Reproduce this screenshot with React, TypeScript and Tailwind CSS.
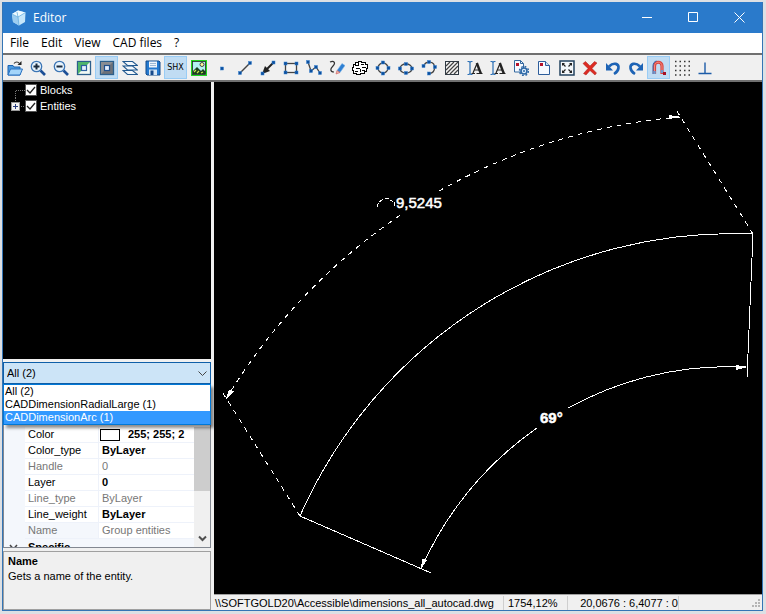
import type { ReactNode } from 'react';
import clsx from 'clsx';

const NODE = '#0b4f9e';
const LINE = '#444444';

// Small square handles drawn on the ends of every entity icon
function Nodes({ points }: { points: number[][] }) {
  return (
    <>
      {points.map(([x, y]) => (
        <rect key={`${x}-${y}`} x={x - 1.5} y={y - 1.5} width="3" height="3" fill={NODE} stroke="#3b82cf" strokeWidth="0.5" />
      ))}
    </>
  );
}

function Magnifier({ plus }: { plus?: boolean }) {
  return (
    <>
      <path d="M10.5 10.5l4.5 4.5" stroke="#1c4f96" strokeWidth="2.6" />
      <circle cx="6.5" cy="6.5" r="5.2" fill="#e8f4fd" stroke="#3d76b5" strokeWidth="1.3" />
      <path d={plus ? 'M3.5 6.5h6M6.5 3.5v6' : 'M3.5 6.5h6'} stroke="#1b2a3c" strokeWidth="2" />
    </>
  );
}

function TextTool() {
  return (
    <>
      <path d="M0.5 1.5h1.5l1 1 1-1h1.5M3 2v12M0.5 14.5h1.5l1-1 1 1h1.5" fill="none" stroke="#2a6fb5" strokeWidth="1.2" />
      <path d="M4.5 13.5h3.5M9.5 13.5h6M6 13l4-9.5" fill="none" stroke="#222" strokeWidth="1.2" />
      <path d="M9.8 3l4 10.5" stroke="#222" strokeWidth="2.4" />
      <path d="M7.5 10h4.5" stroke="#222" />
    </>
  );
}

const tools: { label: string; pressed?: boolean; icon: ReactNode }[] = [
  {
    label: 'Open',
    icon: (
      <>
        <path d="M1 5.5h5L7 7h6v8H1z" fill="#4a9ae0" stroke="#1c62b0" />
        <path d="M3.5 9h12L13 15H1z" fill="#a4d5fa" stroke="#2871c0" />
        <path d="M7 3.5c1.5-2 4-2 5.5 0" fill="none" stroke="#333" strokeWidth="1.2" />
        <path d="M14.5 1v4h-4z" fill="#222" />
      </>
    ),
  },
  { label: 'Zoom in', icon: <Magnifier plus /> },
  { label: 'Zoom out', icon: <Magnifier /> },
  {
    label: 'Bird view',
    icon: (
      <>
        <rect x="1.5" y="1.5" width="13" height="13" fill="#f2faf5" stroke="#2c5f8c" strokeWidth="1.3" />
        <path d="M2 2h12L2 14z" fill="#4fb56b" />
        <rect x="5.5" y="5.5" width="5" height="5" fill="#e5f1ff" stroke="#2d62a0" strokeWidth="1.2" />
      </>
    ),
  },
  {
    label: 'Background',
    pressed: true,
    icon: (
      <>
        <rect x="1.5" y="1.5" width="13" height="13" fill="#6d7178" stroke="#2c5f8c" strokeWidth="1.3" />
        <path d="M2 2h12L2 14z" fill="#8a8d92" />
        <rect x="5.5" y="5.5" width="5" height="5" fill="#e4efff" stroke="#1f4f8c" strokeWidth="1.2" />
      </>
    ),
  },
  {
    label: 'Layers',
    icon: (
      <g fill="#f3f8fc" stroke="#21588f" strokeWidth="1.1">
        <path d="M1 10.5h9.5l5 4H5.5z" />
        <path d="M1 6h9.5l5 4H5.5z" />
        <path d="M1 1.5h9.5l5 4H5.5z" />
      </g>
    ),
  },
  {
    label: 'Save',
    icon: (
      <>
        <path d="M1 1h13l1 1v13H2l-1-1z" fill="#2479cf" stroke="#124a8a" />
        <path d="M4 1.5h8v6H4z" fill="#f0f5fb" />
        <path d="M5 3.5h6M5 5.5h6" stroke="#9db9d6" />
        <path d="M4 9.5h8V15H4z" fill="#d5e5f5" />
        <path d="M5.5 10.5h3V15h-3z" fill="#15488a" />
      </>
    ),
  },
  { label: 'SHX', pressed: true, icon: null },
  {
    label: 'Image',
    icon: (
      <>
        <rect x="0.5" y="0.5" width="15" height="15" fill="#b3f1f2" stroke="#20d820" strokeWidth="1.5" />
        <rect x="1.5" y="1.5" width="13" height="13" fill="none" stroke="#222" strokeWidth="0.8" />
        <circle cx="11" cy="4.5" r="2" fill="#fff9a0" stroke="#222" strokeWidth="0.8" />
        <path d="M2 11l4-4 4 4 2-2 2.500 2.500V14H2z" fill="#173f1b" />
        <path d="M3 12l2-2M6 13l2-2M10 13l2-1" stroke="#c9e54c" strokeWidth="1.2" />
      </>
    ),
  },
  { label: 'Point', icon: <Nodes points={[[8, 8.5]]} /> },
  {
    label: 'Line',
    icon: (
      <>
        <path d="M3 13L13 3" stroke={LINE} strokeWidth="1.5" />
        <Nodes points={[[3, 13], [13, 3]]} />
      </>
    ),
  },
  {
    label: 'Leader',
    icon: (
      <>
        <path d="M13 3L6 10" stroke="#222" strokeWidth="2" />
        <path d="M2 14l3-8 5 5z" fill="#222" />
        <Nodes points={[[13.5, 2.5], [2.5, 13.5]]} />
      </>
    ),
  },
  {
    label: 'Rectangle',
    icon: (
      <>
        <rect x="2.5" y="3.5" width="11" height="9" fill="#f5f5f5" stroke={LINE} strokeWidth="1.3" />
        <Nodes points={[[2.5, 3.5], [13.5, 3.5], [2.5, 12.5], [13.5, 12.5]]} />
      </>
    ),
  },
  {
    label: 'Polyline',
    icon: (
      <>
        <path d="M2 2l3 9 5-4 4 6" fill="none" stroke={LINE} strokeWidth="1.3" />
        <Nodes points={[[2, 2], [5, 11], [10, 7], [14, 13]]} />
      </>
    ),
  },
  {
    label: 'Freehand',
    icon: (
      <>
        <path d="M1 2c4-2 6 1 3 4s-3 6 1 6" fill="none" stroke="#333" strokeWidth="1.2" />
        <path d="M8 10.5l5-7 3 2-5 7z" fill="#2e7fd2" stroke="#7ab4ea" strokeWidth="0.6" />
        <path d="M8 10.5l3 2-4 1.5z" fill="#e8b9ac" stroke="#c55" strokeWidth="0.6" />
      </>
    ),
  },
  {
    label: 'Cloud',
    icon: (
      <g fill="white" stroke="#000" strokeWidth="1" shapeRendering="crispEdges">
        <path d="M3.5 2.500h3v-1h3v1h4v2h2v4h-1v3h-2v2h-4v1h-4v-1h-3v-3h-1v-3h1v-3h2z" />
        <path d="M3 5.500h3M6.500 3v3M9 4.500h3M10 7.500h4M4 8.500h4M3 11.500h3M8.500 9v3M10 10.500h3" fill="none" />
      </g>
    ),
  },
  {
    label: 'Circle',
    icon: (
      <>
        <circle cx="8" cy="8" r="5" fill="none" stroke={LINE} strokeWidth="1.3" />
        <Nodes points={[[8, 2.5], [2.5, 8], [13.5, 8], [8, 13.5]]} />
      </>
    ),
  },
  {
    label: 'Ellipse',
    icon: (
      <>
        <ellipse cx="8" cy="8.5" rx="6" ry="4.5" fill="none" stroke={LINE} strokeWidth="1.3" />
        <Nodes points={[[8, 4], [2, 8.5], [14, 8.5], [8, 13]]} />
      </>
    ),
  },
  {
    label: 'Arc',
    icon: (
      <>
        <path d="M2.500 6C5 0 14 1 13.500 8c0 3-2 5-5 5.500" fill="none" stroke={LINE} strokeWidth="1.3" />
        <Nodes points={[[2.5, 6], [8, 2], [14, 7], [8, 13.5]]} />
      </>
    ),
  },
  {
    label: 'Hatch',
    icon: (
      <>
        <rect x="1.5" y="1.5" width="13" height="13" fill="#f6f6f6" stroke="#2f3a45" />
        <path d="M2 6l4-4M2 10l8-8M2 14L14 2M6 14l8-8M10 14l4-4" stroke="#444" strokeWidth="1.2" />
      </>
    ),
  },
  { label: 'Text', icon: <TextTool /> },
  { label: 'Multiline text', icon: <TextTool /> },
  {
    label: 'Block settings',
    icon: (
      <>
        <path d="M1.5 0.5h6l3 3v8.5h-9z" fill="#f6faff" stroke="#33689f" />
        <path d="M7.5 0.5v3h3" fill="none" stroke="#33689f" />
        <rect x="3" y="3" width="3" height="3" fill="#b5122a" />
        <circle cx="11" cy="11" r="3" fill="#d9ebfb" stroke="#2d68a6" strokeWidth="1.6" />
        <circle cx="11" cy="11" r="4.5" fill="none" stroke="#2d68a6" strokeWidth="1.5" strokeDasharray="1.8 1.734" />
        <circle cx="11" cy="11" r="1" fill="#2d68a6" />
      </>
    ),
  },
  {
    label: 'New block',
    icon: (
      <>
        <path d="M2.5 1.5h7l4 4v9h-11z" fill="#f6faff" stroke="#2d5d9b" />
        <path d="M9.5 1.5v4h4" fill="#c9dff5" stroke="#2d5d9b" />
        <rect x="4" y="3" width="3" height="3" fill="#b5122a" />
      </>
    ),
  },
  {
    label: 'Fit to window',
    icon: (
      <>
        <rect x="1" y="1" width="14" height="14" fill="#f4f7fa" stroke="#23435f" strokeWidth="1.5" />
        <path d="M4 4l2.5 2.5M12 4L9.5 6.5M4 12l2.5-2.5M12 12L9.5 9.5" stroke="#222" strokeWidth="1.2" />
        <path d="M3 3h3L3 6zM13 3h-3l3 3zM3 13h3l-3-3zM13 13h-3l3-3z" fill="#222" />
      </>
    ),
  },
  {
    label: 'Delete',
    icon: <path d="M1 3.5L3.5 1.5 8 6l4.5-4.5L15 3 10 8.5l4.5 4.5L13 15l-5-4.5L4 15l-2.5-1.5L6 8.5z" fill="#dc2b22" stroke="#a81f1a" strokeWidth="0.5" />,
  },
  {
    label: 'Undo',
    icon: (
      <>
        <path d="M4 6.5c5-5 10-2.5 9.5 1.5-.3 3-2 4.5-4.500 6" fill="none" stroke="#1d63b5" strokeWidth="2.6" />
        <path d="M1 3v7.5h7z" fill="#1d63b5" />
      </>
    ),
  },
  {
    label: 'Redo',
    icon: (
      <>
        <path d="M12 6.5c-5-5-10-2.500-9.500 1.500.3 3 2 4.500 4.500 6" fill="none" stroke="#1d63b5" strokeWidth="2.6" />
        <path d="M15 3v7.5H8z" fill="#1d63b5" />
      </>
    ),
  },
  {
    label: 'Snap',
    pressed: true,
    icon: (
      <>
        <path d="M3.500 14V6c0-5 7.500-5 7.500 0v8" fill="none" stroke="#d8453f" strokeWidth="3.2" />
        <path d="M3.500 12V6c0-5 7.500-5 7.500 0v5" fill="none" stroke="#f58b80" strokeWidth="1" />
        <path d="M2 14V6c0-3 1.500-4.500 3.500-5" fill="none" stroke="#3b68ad" strokeWidth="1" />
        <path d="M3.500 11v3M11 10v3" stroke="#6d9ad0" strokeWidth="2.4" />
        <rect x="12" y="12" width="3" height="3" fill="#a51126" />
      </>
    ),
  },
  {
    label: 'Grid',
    icon: <path d="M1 1.5h15M1 6h15M1 10.5h15M1 15h15" stroke="#333" strokeWidth="1.500" strokeDasharray="1.500 3" />,
  },
  {
    label: 'Ortho',
    icon: <path d="M8 2.5v10.5M1.500 13.5h13" stroke="#1d5ca8" strokeWidth="1.4" />,
  },
];

const properties = [
  { name: 'Color', value: '255; 255; 2', swatch: true },
  { name: 'Color_type', value: 'ByLayer' },
  { name: 'Handle', value: '0', readOnly: true },
  { name: 'Layer', value: '0' },
  { name: 'Line_type', value: 'ByLayer', readOnly: true },
  { name: 'Line_weight', value: 'ByLayer' },
  { name: 'Name', value: 'Group entities', readOnly: true, selected: true },
];

const filters = ['All (2)', 'CADDimensionRadialLarge (1)', 'CADDimensionArc (1)'];

function TitleBar() {
  return (
    <header className="flex h-[31px] shrink-0 items-center bg-[#2a7acb] text-white">
      <svg className="ml-2 size-4" viewBox="0 0 16 16">
        <path d="M1 4l6-3.5 7.5 2L14 12l-6 3.5L2 12z" fill="#c6e6fa" />
        <path d="M1 4l6 3 1 8.5L2 12z" fill="#9ccdf0" />
        <path d="M1 4l6-3.5 7.5 2L7 7z" fill="#eefaff" />
        <path d="M1 4l6 3 7.5-4.5M7 7l1 8.5M7 7L6 2" fill="none" stroke="#5ba7dd" strokeWidth="0.7" />
      </svg>
      <h1 className="ml-[6px] flex-1 font-['Open_Sans','Noto_Sans',sans-serif] text-[12px]">Editor</h1>
      <button aria-label="Minimize" className="flex h-full w-[46px] items-center justify-center">
        <svg className="size-[11px]" viewBox="0 0 11 11"><path d="M0 5.5h10" stroke="white" /></svg>
      </button>
      <button aria-label="Maximize" className="flex h-full w-[46px] items-center justify-center">
        <svg className="size-[11px]" viewBox="0 0 11 11"><path d="M.5.5h9v9h-9z" fill="none" stroke="white" /></svg>
      </button>
      <button aria-label="Close" className="flex h-full w-[46px] items-center justify-center">
        <svg className="size-[11px]" viewBox="0 0 11 11"><path d="M.5.5l10 10M10.5.5l-10 10" stroke="white" /></svg>
      </button>
    </header>
  );
}

function MenuBar() {
  return (
    <nav className="flex h-5 shrink-0 items-center bg-white pl-px font-['Open_Sans','Noto_Sans',sans-serif] text-[12px]">
      {['File', 'Edit', 'View', 'CAD files', '?'].map((item) => (
        <button key={item} className="px-[6px]">{item}</button>
      ))}
    </nav>
  );
}

function Toolbar() {
  return (
    <div role="toolbar" className="flex h-[29px] shrink-0 items-center overflow-hidden border-y-2 border-[#707070] bg-[#f0f0f0]">
      {tools.map(({ label, pressed, icon }) => (
        <button
          key={label}
          aria-label={label}
          className={clsx(
            'flex h-[23px] w-[23px] shrink-0 items-center justify-center border',
            pressed ? 'border-[#99ccf5] bg-[#c0dcf3]' : 'border-transparent'
          )}
        >
          {icon ? (
            <svg className="size-4 shrink-0" viewBox="0 0 16 16">{icon}</svg>
          ) : (
            <span className="font-['DejaVu_Sans',sans-serif] text-[8px]">{label}</span>
          )}
        </button>
      ))}
    </div>
  );
}

function TreeItem({ label, expandable }: { label: string; expandable?: boolean }) {
  return (
    <li className="flex h-4 items-center">
      <svg className="h-4 w-[22px]" viewBox="0 0 22 16" shapeRendering="crispEdges">
        <path d={expandable ? 'M12.5 0v8M12 8.5h10' : 'M12.5 16V8.5H22'} fill="none" stroke="#777" strokeDasharray="1 1" />
        {expandable && (
          <>
            <rect x="8.5" y="4.5" width="8" height="8" fill="#f4f4f4" stroke="#999" />
            <path d="M10 8.5h5M12.5 6v5" stroke="#2a3f80" />
          </>
        )}
      </svg>
      <label className="flex items-center gap-[3px]">
        <span className="relative size-3">
          <input type="checkbox" defaultChecked className="block size-3 appearance-none border border-[#555] bg-white" />
          <svg className="pointer-events-none absolute inset-0 size-3" viewBox="0 0 12 12">
            <path d="M2 6l3 3 5-6" fill="none" stroke="#222" strokeWidth="1.3" />
          </svg>
        </span>
        {label}
      </label>
    </li>
  );
}

function FilterBox() {
  return (
    <div className="relative shrink-0">
      <select
        aria-label="Entity filter"
        className="block h-[22px] w-full appearance-none border border-[#0f5fa8] bg-[#cce4f7] pl-[3px] text-[11px] outline-none"
      >
        {filters.map((item) => <option key={item}>{item}</option>)}
      </select>
      <svg className="pointer-events-none absolute top-[7px] right-1 size-[9px]" viewBox="0 0 9 9">
        <path d="M.5 2.5l4 4 4-4" fill="none" stroke="#444" />
      </svg>
      <ul
        role="listbox"
        className="absolute inset-x-0 top-full z-10 border border-[#0078d7] bg-white shadow-[3px_3px_3px_rgba(0,0,0,0.45)]"
      >
        {filters.map((item, index) => (
          <li
            key={item}
            role="option"
            aria-selected={index === 2}
            className={clsx('h-[13px] pl-px leading-[13px]', index === 2 && 'bg-[#3399ff] text-white')}
          >
            {item}
          </li>
        ))}
      </ul>
    </div>
  );
}

function PropertyGrid() {
  return (
    <div className="flex h-[164px] shrink-0 overflow-hidden border border-[#828790] bg-white pt-[42px]">
      <div className="min-w-0 flex-1 overflow-hidden bg-[#f4f7fc]">
        <table className="w-full table-fixed border-separate border-spacing-0">
          <tbody>
            {properties.map((row) => (
              <tr key={row.name} className={clsx('h-4 leading-[15px]', row.readOnly && 'text-[#777]')}>
                <td className="w-[21px] p-0" />
                <th
                  className={clsx(
                    'w-[74px] border-r border-b border-[#eef2fa] p-0 pl-[3px] text-left font-normal',
                    !row.selected && 'bg-white'
                  )}
                >
                  {row.name}
                </th>
                <td className="overflow-hidden border-b border-[#eef2fa] bg-white p-0 pl-[3px] whitespace-nowrap">
                  <span className="flex items-center">
                    {row.swatch && <span className="mr-2 -ml-[2px] h-3 w-5 border border-black bg-white" />}
                    <span className={row.readOnly ? 'font-normal' : 'font-bold'}>{row.value}</span>
                  </span>
                </td>
              </tr>
            ))}
            <tr className="h-4 leading-[15px]">
              <td className="p-0 pl-[5px]">
                <svg className="size-[9px]" viewBox="0 0 9 9"><path d="M1 2l3.5 4L8 2" fill="none" stroke="#444" strokeWidth="1.5" /></svg>
              </td>
              <th colSpan={2} className="p-0 pl-[3px] text-left font-bold">Specific</th>
            </tr>
          </tbody>
        </table>
      </div>
      <div className="flex w-4 shrink-0 flex-col justify-between bg-[#f0f0f0]">
        <div className="h-16 bg-[#cdcdcd]" />
        <svg className="mx-auto mb-1 size-[9px]" viewBox="0 0 9 9">
          <path d="M1 2.5L4.5 6 8 2.5" fill="none" stroke="#505050" strokeWidth="2" />
        </svg>
      </div>
    </div>
  );
}

function SidePanel() {
  return (
    <aside className="flex w-[208px] shrink-0 flex-col">
      <ul className="min-h-0 flex-1 bg-black text-white">
        <TreeItem label="Blocks" />
        <TreeItem label="Entities" expandable />
      </ul>
      <div className="h-[3px] shrink-0" />
      <FilterBox />
      <PropertyGrid />
      <section className="mt-[3px] h-[59px] shrink-0 border border-[#a0a0a0] px-1 pt-[2px] leading-[15px]">
        <h2 className="font-bold">Name</h2>
        <p>Gets a name of the entity.</p>
      </section>
    </aside>
  );
}

// Dimensioned arc: three concentric arcs around (733, 706) with radii 592, 473 and 340
function Drawing() {
  return (
    <svg className="min-h-0 w-full flex-1 bg-black" viewBox="214 82 548 512" fill="none" stroke="white" shapeRendering="crispEdges">
      <path d="M300 516A473 473 0 0 1 753 234" />
      <path d="M753 234L747 378M300 516L431 573" />
      <path d="M421 569A340 340 0 0 1 537 428M568 408A340 340 0 0 1 746 367" />
      <g strokeDasharray="5 5">
        <path d="M226 399A592 592 0 0 1 402 214M439 191A592 592 0 0 1 680 117" />
        <path d="M753 234L675 108M300 516L221 390" />
      </g>
      <g fill="white" stroke="none">
        <path d="M682 117l-13-2v4zM748 367l-12-2v5zM226 399l3-9 5 1zM421 569l1-10 5 1z" />
      </g>
      <path d="M377 207c1-6 6-9 12-8l4 3M394 202v6" strokeDasharray="4 2" />
      <g fill="white" stroke="white" strokeWidth="0.5" className="font-['Liberation_Sans',Arial,sans-serif]">
        <text x="396" y="208" fontSize="15">9,5245</text>
        <text x="540" y="423" fontSize="15" fontWeight="bold">69°</text>
      </g>
    </svg>
  );
}

function StatusBar() {
  return (
    <footer className="flex h-4 shrink-0 items-center border-t border-[#a0a0a0] leading-[14px]">
      <span className="w-[290px] border-r border-[#cfcfcf] pl-px">\\SOFTGOLD20\Accessible\dimensions_all_autocad.dwg</span>
      <span className="w-16 border-r border-[#cfcfcf] pl-1">1754,12%</span>
      <span className="w-[111px] border-r border-[#cfcfcf] text-right">20,0676 : 6,4077 : 0</span>
      <svg className="mr-px ml-auto size-[10px]" viewBox="0 0 10 10" fill="#b5b5b5">
        <path d="M7 1h2v2H7zM4 4h2v2H4zM7 4h2v2H7zM1 7h2v2H1zM4 7h2v2H4zM7 7h2v2H7z" />
      </svg>
    </footer>
  );
}

export default function App() {
  return (
    <div className="h-screen bg-[#dde0e4] pt-[2px] pr-[3px] pb-[3px] pl-[2px] font-['Liberation_Sans',Arial,sans-serif] text-[11px] text-black">
      <div className="flex h-full flex-col border border-t-0 border-[#3475b5] bg-[#f0f0f0]">
        <TitleBar />
        <MenuBar />
        <Toolbar />
        <div className="flex min-h-0 flex-1">
          <SidePanel />
          <main className="ml-[3px] flex min-w-0 flex-1 flex-col">
            <Drawing />
            <StatusBar />
          </main>
        </div>
      </div>
    </div>
  );
}
